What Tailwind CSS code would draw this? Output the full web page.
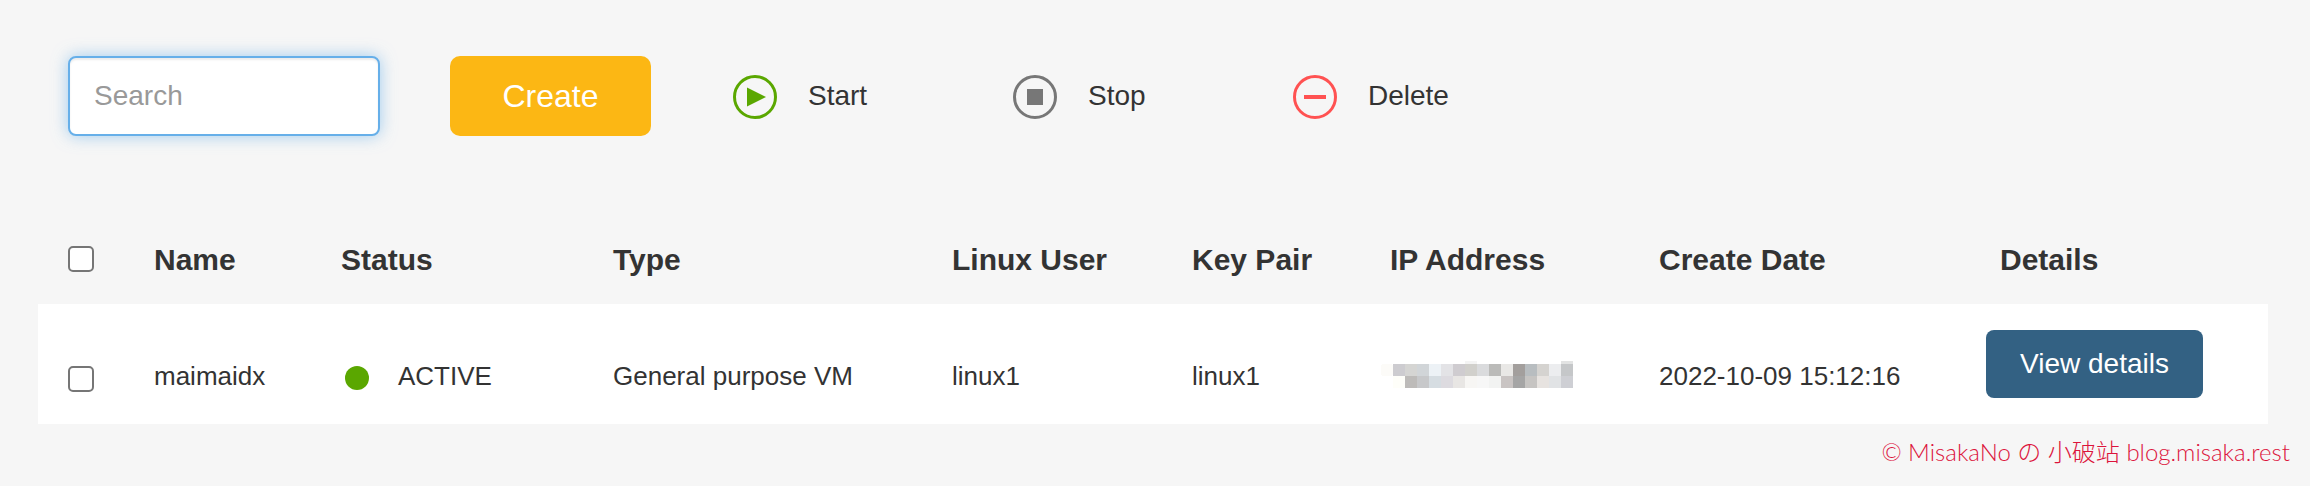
<!DOCTYPE html>
<html lang="en">
<head>
<meta charset="utf-8">
<title>Virtual machines</title>
<script src="https://cdn.jsdelivr.net/npm/@tailwindcss/browser@4"></script>
</head>
<body class="bg-[#f6f6f6] font-['Liberation_Sans',Arial,sans-serif] text-[26px] text-[#333]">
<main class="pt-14">
  <div class="flex items-center pl-[68px]">
    <input type="text" placeholder="Search" aria-label="Search" class="h-20 w-[312px] rounded-lg border-2 border-[#66afe9] bg-white px-6 text-[28px] outline-none placeholder:text-[#999] shadow-[inset_0_2px_2px_rgba(0,0,0,0.075),0_0_16px_rgba(102,175,233,0.6)]">
    <button type="button" class="ml-[70px] h-20 w-[201px] rounded-[10px] bg-[#fcb714] text-[32px] text-white">Create</button>
    <div class="ml-[82px] flex pt-0.5 text-[28px]">
      <div class="w-[280px]">
        <button type="button" class="flex items-center gap-[31px]">
          <svg class="size-11" viewBox="0 0 44 44" aria-hidden="true"><circle cx="22" cy="22" r="20.500" fill="none" stroke="#5aa700" stroke-width="3"/><path d="M14 12.500L33 22L14 31.500Z" fill="#5aa700"/></svg>
          <span class="pb-0.5">Start</span>
        </button>
      </div>
      <div class="w-[280px]">
        <button type="button" class="flex items-center gap-[31px]">
          <svg class="size-11" viewBox="0 0 44 44" aria-hidden="true"><circle cx="22" cy="22" r="20.500" fill="none" stroke="#777" stroke-width="3"/><path d="M14 14H30V30H14Z" fill="#777"/></svg>
          <span class="pb-0.5">Stop</span>
        </button>
      </div>
      <div class="w-[280px]">
        <button type="button" class="flex items-center gap-[31px]">
          <svg class="size-11" viewBox="0 0 44 44" aria-hidden="true"><circle cx="22" cy="22" r="20.500" fill="none" stroke="#ff5252" stroke-width="3"/><path d="M11 20H33V24H11Z" fill="#ff5252"/></svg>
          <span class="pb-0.5">Delete</span>
        </button>
      </div>
    </div>
  </div>

  <div class="pt-[78px] pr-[42px] pl-[38px]">
    <table class="w-full table-fixed text-left">
      <colgroup>
        <col class="w-[116px]"><col class="w-[187px]"><col class="w-[272px]"><col class="w-[339px]"><col class="w-[240px]"><col class="w-[189px]"><col class="w-[278px]"><col class="w-[327px]"><col>
      </colgroup>
      <thead>
        <tr class="h-[90px] text-[30px]">
          <th class="pl-[30px]"><input type="checkbox" aria-label="Select all" class="block size-[26px] appearance-none rounded-[5px] border-2 border-[#767676] bg-white checked:bg-[#0075ff]"></th>
          <th>Name</th>
          <th>Status</th>
          <th>Type</th>
          <th>Linux User</th>
          <th>Key Pair</th>
          <th class="pl-[9px]">IP Address</th>
          <th>Create Date</th>
          <th class="pl-3.5">Details</th>
        </tr>
      </thead>
      <tbody>
        <tr class="h-[120px] bg-white">
          <td class="pt-[30px] pl-[30px]"><input type="checkbox" aria-label="Select maimaidx" class="block size-[26px] appearance-none rounded-[5px] border-2 border-[#767676] bg-white checked:bg-[#0075ff]"></td>
          <td class="pt-6">maimaidx</td>
          <td class="pt-6"><div class="flex items-center gap-[29px] pl-1"><span class="mt-1 size-6 rounded-full bg-[#5aa700]"></span>ACTIVE</div></td>
          <td class="pt-6">General purpose VM</td>
          <td class="pt-6">linux1</td>
          <td class="pt-6">linux1</td>
          <td class="pt-5">
            <svg class="h-7 w-48" viewBox="0 0 192 28" shape-rendering="crispEdges" role="img" aria-label="Hidden address">
              <rect x="84" y="1" width="12" height="3" fill="#f4f4f4"/><rect x="180" y="1" width="12" height="3" fill="#e2e3e3"/>
              <rect x="0" y="4" width="12" height="12" rx="3" fill="#fcfbf8"/>
              <rect x="12" y="4" width="12" height="12" fill="#cdccd0"/>
              <rect x="24" y="4" width="12" height="12" fill="#d5d5d3"/>
              <rect x="36" y="4" width="12" height="12" fill="#d1d5d8"/>
              <rect x="48" y="4" width="12" height="12" fill="#edf2f6"/>
              <rect x="60" y="4" width="12" height="12" fill="#e3e3e6"/>
              <rect x="72" y="4" width="12" height="12" fill="#cfccd0"/>
              <rect x="84" y="4" width="12" height="12" fill="#d1d0cc"/>
              <rect x="96" y="4" width="12" height="12" fill="#dadbdd"/>
              <rect x="108" y="4" width="12" height="12" fill="#bbbbb9"/>
              <rect x="120" y="4" width="12" height="12" fill="#e9e8e6"/>
              <rect x="132" y="4" width="12" height="12" fill="#a39f9d"/>
              <rect x="144" y="4" width="12" height="12" fill="#b8bdc0"/>
              <rect x="156" y="4" width="12" height="12" fill="#d5d3d0"/>
              <rect x="168" y="4" width="12" height="12" fill="#ecedef"/>
              <rect x="180" y="4" width="12" height="12" fill="#c5c7c9"/>
              <rect x="12" y="16" width="12" height="12" fill="#fefef9"/>
              <rect x="24" y="16" width="12" height="12" fill="#bdbbb9"/>
              <rect x="36" y="16" width="12" height="12" fill="#c7c8ca"/>
              <rect x="48" y="16" width="12" height="12" fill="#d6dde2"/>
              <rect x="60" y="16" width="12" height="12" fill="#dddbe0"/>
              <rect x="72" y="16" width="12" height="12" fill="#e8e6e4"/>
              <rect x="84" y="16" width="12" height="12" fill="#f7f6f4"/>
              <rect x="96" y="16" width="12" height="12" fill="#f7f7f7"/>
              <rect x="108" y="16" width="12" height="12" fill="#f2f3f2"/>
              <rect x="120" y="16" width="12" height="12" fill="#c9c4c3"/>
              <rect x="132" y="16" width="12" height="12" fill="#a5a5a5"/>
              <rect x="144" y="16" width="12" height="12" fill="#c6c4c2"/>
              <rect x="156" y="16" width="12" height="12" fill="#e7e3e0"/>
              <rect x="168" y="16" width="12" height="12" fill="#e1e3e5"/>
              <rect x="180" y="16" width="12" height="12" fill="#cecfd4"/>
            </svg>
          </td>
          <td class="pt-6">2022-10-09 15:12:16</td>
          <td><button type="button" class="block h-[68px] w-[217px] rounded-lg bg-[#336183] text-[28px] text-white">View details</button></td>
        </tr>
      </tbody>
    </table>
  </div>
  <footer class="pt-3 pr-5 text-right font-[Lato,'Noto_Sans_CJK_SC',sans-serif] text-[24px] leading-8 font-light text-[#dc143c]">© MisakaNo の 小破站 blog.misaka.rest</footer>
</main>
</body>
</html>
